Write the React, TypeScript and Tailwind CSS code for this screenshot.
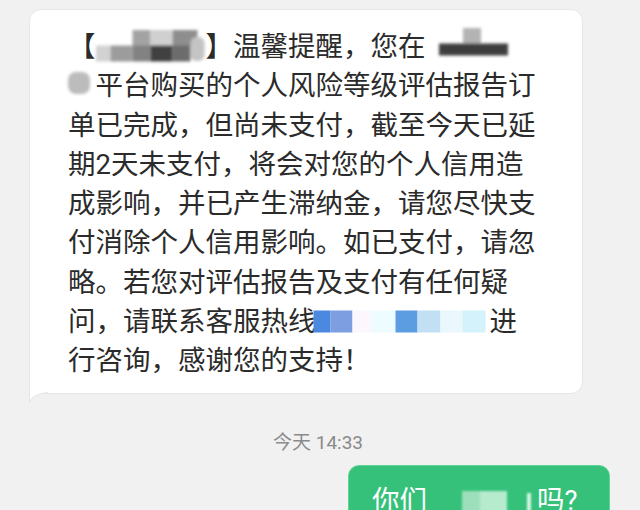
import React from "react";

// mosaic blocks that hide private text in the screenshot
type Piece = { x: number; y: number; w: number; h: number; c: string; r?: number };

const Mosaic: React.FC<{ width: number; pieces: Piece[]; blur?: number; id: string }> = ({
  width,
  pieces,
  blur = 1.2,
  id,
}) => (
  <svg
    width={width}
    height={39}
    viewBox={`0 0 ${width} 39`}
    className="inline-block align-top overflow-visible"
  >
    <defs>
      <filter id={id} x="-20%" y="-20%" width="140%" height="140%">
        <feGaussianBlur stdDeviation={blur} />
      </filter>
    </defs>
    <g filter={`url(#${id})`}>
      {pieces.map((p, i) => (
        <rect key={i} x={p.x} y={p.y} width={p.w} height={p.h} rx={p.r ?? 0} fill={p.c} />
      ))}
    </g>
  </svg>
);

const nameBlur: Piece[] = [
  { x: 36.5, y: 3, w: 18, h: 16, c: "#a3a3a3" },
  { x: 54.5, y: 3, w: 22, h: 16, c: "#d0d0d0" },
  { x: 76.5, y: 3, w: 25, h: 16, c: "#8e8e8e" },
  { x: 0, y: 18.5, w: 14.5, h: 16, c: "#d2d2d2" },
  { x: 14.5, y: 18.5, w: 22, h: 16, c: "#9c9c9c" },
  { x: 36.5, y: 18.5, w: 18, h: 16, c: "#828282" },
  { x: 54.5, y: 18.5, w: 22, h: 16, c: "#404040" },
  { x: 76.5, y: 18.5, w: 18, h: 16, c: "#6c6c6c" },
  { x: 94.5, y: 10, w: 14, h: 24, c: "#c4c4c4", r: 6 },
];

const placeBlur: Piece[] = [
  { x: 37, y: 1, w: 18, h: 16, c: "#b3b3b3" },
  { x: 13, y: 16.5, w: 69, h: 12, c: "#3e3e3e" },
];

const placeBlur2: Piece[] = [{ x: 0, y: 6, w: 22, h: 22, c: "#bcbcbc", r: 8 }];

const phoneBlur: Piece[] = [
  { x: -2.5, y: 8.5, w: 17, h: 22, c: "#4b88df" },
  { x: 14.5, y: 8.5, w: 22, h: 22, c: "#7d9fe2" },
  { x: 36.5, y: 8.5, w: 18, h: 22, c: "#fbf7fd" },
  { x: 54.5, y: 8.5, w: 25, h: 22, c: "#eefbff" },
  { x: 79.5, y: 8.5, w: 22, h: 22, c: "#5b9de2" },
  { x: 101.5, y: 8.5, w: 23, h: 22, c: "#c3dff4" },
  { x: 124.5, y: 8.5, w: 22, h: 22, c: "#eaf8fd" },
  { x: 146.5, y: 8.5, w: 23, h: 22, c: "#d3f2fb" },
];

const greenBlur: Piece[] = [
  { x: 35, y: 10, w: 18, h: 22, c: "#9ddfbb" },
  { x: 53, y: 10, w: 27, h: 22, c: "#b6ebcd" },
  { x: 100, y: 12, w: 4, h: 22, c: "#d6f4e4" },
];

const lines = [
  "单已完成，但尚未支付，截至今天已延",
  "期2天未支付，将会对您的个人信用造",
  "成影响，并已产生滞纳金，请您尽快支",
  "付消除个人信用影响。如已支付，请忽",
  "略。若您对评估报告及支付有任何疑",
];

export default function App() {
  return (
    <div
      className="h-[510px] w-[640px] overflow-hidden bg-[#f1f1f1] flex flex-col"
      style={{ fontFamily: '"Roboto", "Noto Sans CJK SC", sans-serif' }}
    >
      {/* incoming message */}
      <div className="relative mt-[9px] ml-[29px] w-[554px] bg-white border border-[#e6e6e6] rounded-[12px] rounded-bl-none pl-[38px] pt-[17px] pb-[12px] text-[27.5px] leading-[39.3px] text-[#2b2b2b]">
        <div className="whitespace-nowrap">
          【<Mosaic id="m1" width={110} pieces={nameBlur} blur={1.8} />】温馨提醒，您在
          <Mosaic id="m2" width={82} pieces={placeBlur} blur={1.6} />
        </div>
        <div className="whitespace-nowrap">
          <Mosaic id="m3" width={27.5} pieces={placeBlur2} blur={1.6} />
          平台购买的个人风险等级评估报告订
        </div>
        {lines.map((l) => (
          <div key={l} className="whitespace-nowrap">
            {l}
          </div>
        ))}
        <div className="whitespace-nowrap">
          问，请联系客服热线
          <Mosaic id="m4" width={174} pieces={phoneBlur} blur={0.6} />进
        </div>
        <div className="whitespace-nowrap">行咨询，感谢您的支持！</div>

        {/* bubble tail */}
        <svg
          width="20"
          height="11"
          viewBox="0 0 20 11"
          className="absolute left-[-1px] top-full -mt-px"
        >
          <path d="M0.5 0 L0.5 10 Q4 2 19 0.5 L19 0 Z" fill="#ffffff" />
          <path d="M0.5 0 L0.5 10 Q4 2 19 0.5" fill="none" stroke="#e4e4e4" strokeWidth="1" />
        </svg>
      </div>

      {/* timestamp */}
      <div className="mt-[37px] text-center text-[19px] leading-[24px] text-[#8a8a8a] pr-[4px]">
        今天 14:33
      </div>

      {/* outgoing message */}
      <div className="self-end mr-[30px] mt-[10px] w-[262px] h-[80px] bg-[#35c17a] border border-[#5fd598] rounded-[11px] pl-[23px] pt-[15px] text-[27.5px] leading-[39px] text-white whitespace-nowrap">
        你们
        <Mosaic id="m5" width={110} pieces={greenBlur} blur={0.8} />
        吗?
      </div>
    </div>
  );
}
